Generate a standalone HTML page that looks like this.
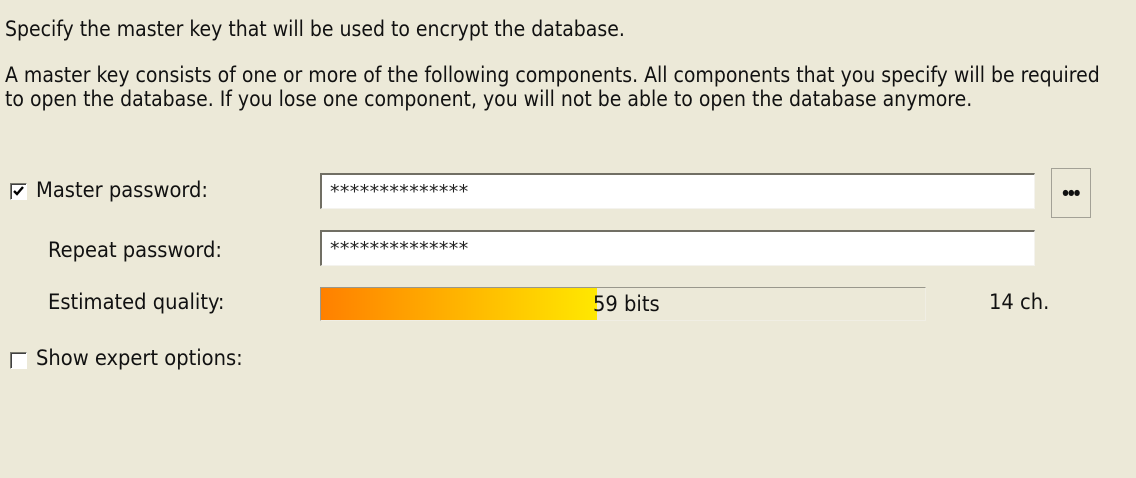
<!DOCTYPE html>
<html><head><style>
body{margin:0;width:1136px;height:478px;background:#ECE9D8;font-family:"DejaVu Sans Condensed","DejaVu Sans","Liberation Sans",sans-serif;font-size:21px;color:#111;position:relative;overflow:hidden}
.a{position:absolute;white-space:nowrap}
.l{font-size:21.7px}
.cb{position:absolute;width:15px;height:15px;background:#fff;border:1px solid;border-color:#7a7a70 #fff #fff #7a7a70;box-shadow:inset 1px 1px 0 #404040}
.in{position:absolute;left:320px;width:715px;background:#fff;border-top:2px solid #716f64;border-left:2px solid #716f64;border-right:1px solid #f4f3ee;border-bottom:1px solid #f4f3ee;box-sizing:border-box}
.st{position:absolute;left:8px;top:6px;font-family:"DejaVu Sans",sans-serif;font-size:19px;letter-spacing:0.4px;color:#222}
</style></head><body>
<div class="a" style="left:5px;top:17px">Specify the master key that will be used to encrypt the database.</div>
<div class="a" style="left:5px;top:63px;line-height:24px">A master key consists of one or more of the following components. All components that you specify will be required<br>to open the database. If you lose one component, you will not be able to open the database anymore.</div>

<div class="cb" style="left:10px;top:183px"><svg width="15" height="15" style="position:absolute;left:0;top:0"><path d="M3 7 L6 10 L12 3" stroke="#000" stroke-width="2.4" fill="none"/></svg></div>
<div class="a l" style="left:36px;top:178px">Master password:</div>
<div class="in" style="top:173px;height:36px"><div class="st">**************</div></div>
<div style="position:absolute;left:1051px;top:168px;width:40px;height:50px;border:1px solid #a3a196;background:#ECE9D8;box-sizing:border-box;text-align:center;line-height:48px;font-size:8px;letter-spacing:-0.5px">●●●</div>

<div class="a l" style="left:48px;top:238px">Repeat password:</div>
<div class="in" style="top:230px;height:36px"><div class="st">**************</div></div>

<div class="a l" style="left:48px;top:290px">Estimated quality:</div>
<div style="position:absolute;left:320px;top:287px;width:606px;height:34px;border-top:1px solid #99978c;border-left:1px solid #99978c;border-right:1px solid #f0eee4;border-bottom:1px solid #f0eee4;box-sizing:border-box"></div>
<div style="position:absolute;left:321px;top:288px;width:276px;height:32px;background:linear-gradient(to right,#ff8000,#ffe800)"></div>
<div class="a l" style="left:593px;top:292px">59 bits</div>
<div class="a l" style="left:989px;top:290px">14 ch.</div>

<div class="cb" style="left:10px;top:352px"></div>
<div class="a l" style="left:36px;top:346px">Show expert options:</div>
</body></html>
